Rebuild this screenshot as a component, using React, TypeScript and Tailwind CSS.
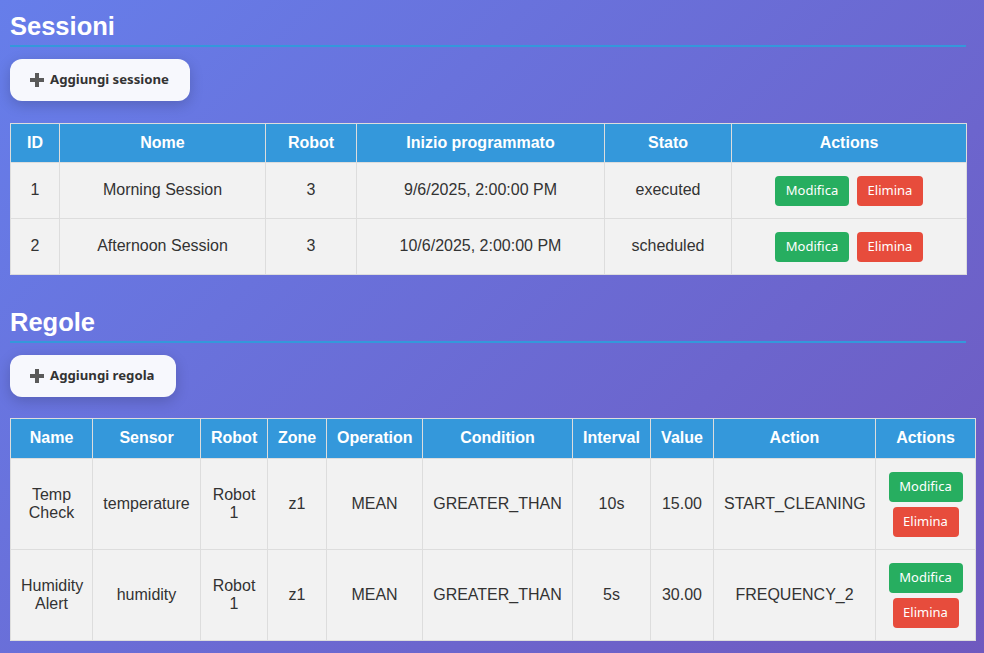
import React from "react";

const sessions = [
  { id: 1, name: "Morning Session", robot: 3, start: "9/6/2025, 2:00:00 PM", state: "executed" },
  { id: 2, name: "Afternoon Session", robot: 3, start: "10/6/2025, 2:00:00 PM", state: "scheduled" },
];

const rules = [
  {
    name: "Temp Check",
    sensor: "temperature",
    robot: "Robot 1",
    zone: "z1",
    operation: "MEAN",
    condition: "GREATER_THAN",
    interval: "10s",
    value: "15.00",
    action: "START_CLEANING",
  },
  {
    name: "Humidity Alert",
    sensor: "humidity",
    robot: "Robot 1",
    zone: "z1",
    operation: "MEAN",
    condition: "GREATER_THAN",
    interval: "5s",
    value: "30.00",
    action: "FREQUENCY_2",
  },
];

const th = "border border-[#ddd] bg-[#3498db] px-[10px] text-center leading-[1.15] font-bold text-white";
const td = "border border-[#ddd] bg-[#f2f2f2] px-[10px] text-center align-middle leading-[1.15] text-[#333]";

function PlusIcon() {
  return (
    <svg width="14" height="14" viewBox="0 0 14 14" className="shrink-0">
      <rect x="5" y="0" width="4" height="14" fill="#5a5a5a" />
      <rect x="0" y="5" width="14" height="4" fill="#5a5a5a" />
    </svg>
  );
}

function AddButton({ label }: { label: string }) {
  return (
    <button className="flex h-[42px] items-center gap-[6px] rounded-xl bg-[#f7f8fd] pr-[21px] pl-[20px] font-['Noto_Sans',sans-serif] text-[13.2px] font-bold text-[#333] shadow-[0_4px_14px_rgba(0,0,0,0.18)]">
      <PlusIcon />
      {label}
    </button>
  );
}

function EditButton() {
  return (
    <button className="h-[30px] w-[74px] rounded-[4px] bg-[#27ae60] font-['Noto_Sans',sans-serif] text-[13px] text-white">
      Modifica
    </button>
  );
}

function DeleteButton() {
  return (
    <button className="h-[30px] w-[66px] rounded-[4px] bg-[#e74c3c] font-['Noto_Sans',sans-serif] text-[13px] text-white">
      Elimina
    </button>
  );
}

function SectionTitle({ children }: { children: React.ReactNode }) {
  return (
    <h2 className="border-b-2 border-[#3498db] pb-[4px] text-[25.5px] leading-[29px] font-bold text-white">
      {children}
    </h2>
  );
}

export default function App() {
  return (
    <div className="min-h-screen bg-[linear-gradient(135deg,#667eea_0%,#6f59bf_100%)] px-[10px] pt-[12px] font-['Liberation_Sans',Arial,sans-serif] text-[16px]">
      <div className="w-[956px]">
        <SectionTitle>Sessioni</SectionTitle>
        <div className="mt-[12px] flex">
          <AddButton label="Aggiungi sessione" />
        </div>

        <table className="mt-[22px] w-[956px] table-fixed border-collapse">
          <colgroup>
            <col className="w-[49px]" />
            <col className="w-[206px]" />
            <col className="w-[91px]" />
            <col className="w-[248px]" />
            <col className="w-[127px]" />
            <col className="w-[235px]" />
          </colgroup>
          <thead>
            <tr className="h-[39px]">
              <th className={th}>ID</th>
              <th className={th}>Nome</th>
              <th className={th}>Robot</th>
              <th className={th}>Inizio programmato</th>
              <th className={th}>Stato</th>
              <th className={th}>Actions</th>
            </tr>
          </thead>
          <tbody>
            {sessions.map((s) => (
              <tr key={s.id} className="h-[56px]">
                <td className={td}>{s.id}</td>
                <td className={td}>{s.name}</td>
                <td className={td}>{s.robot}</td>
                <td className={td}>{s.start}</td>
                <td className={td}>{s.state}</td>
                <td className={td}>
                  <div className="flex justify-center gap-[8px]">
                    <EditButton />
                    <DeleteButton />
                  </div>
                </td>
              </tr>
            ))}
          </tbody>
        </table>

        <div className="mt-[33px]">
          <SectionTitle>Regole</SectionTitle>
        </div>
        <div className="mt-[12px] flex">
          <AddButton label="Aggiungi regola" />
        </div>

        <table className="mt-[21px] w-[965px] max-w-none table-fixed border-collapse">
          <colgroup>
            <col className="w-[82px]" />
            <col className="w-[108px]" />
            <col className="w-[67px]" />
            <col className="w-[59px]" />
            <col className="w-[96px]" />
            <col className="w-[150px]" />
            <col className="w-[78px]" />
            <col className="w-[63px]" />
            <col className="w-[162px]" />
            <col className="w-[100px]" />
          </colgroup>
          <thead>
            <tr className="h-[40px]">
              <th className={th}>Name</th>
              <th className={th}>Sensor</th>
              <th className={th}>Robot</th>
              <th className={th}>Zone</th>
              <th className={th}>Operation</th>
              <th className={th}>Condition</th>
              <th className={th}>Interval</th>
              <th className={th}>Value</th>
              <th className={th}>Action</th>
              <th className={th}>Actions</th>
            </tr>
          </thead>
          <tbody>
            {rules.map((r) => (
              <tr key={r.name} className="h-[91px]">
                <td className={td}>{r.name}</td>
                <td className={td}>{r.sensor}</td>
                <td className={td}>{r.robot}</td>
                <td className={td}>{r.zone}</td>
                <td className={td}>{r.operation}</td>
                <td className={td}>{r.condition}</td>
                <td className={td}>{r.interval}</td>
                <td className={td}>{r.value}</td>
                <td className={td}>{r.action}</td>
                <td className={td}>
                  <div className="flex flex-col items-center gap-[5px]">
                    <EditButton />
                    <DeleteButton />
                  </div>
                </td>
              </tr>
            ))}
          </tbody>
        </table>
      </div>
    </div>
  );
}
